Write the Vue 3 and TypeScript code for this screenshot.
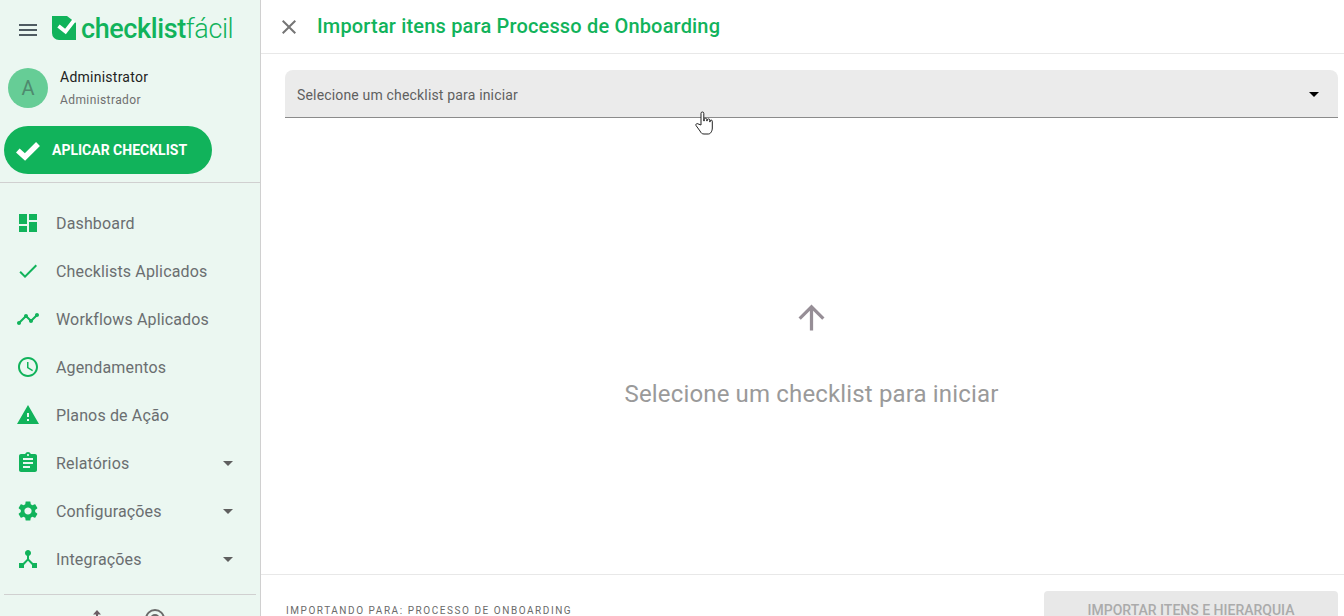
<script setup lang="ts">
interface MenuItem {
  label: string
  icon: string
  children?: boolean
}

const menu: MenuItem[] = [
  { label: 'Dashboard', icon: 'M3 13h8V3H3v10zm0 8h8v-6H3v6zm10 0h8V11h-8v10zm0-18v6h8V3h-8z' },
  { label: 'Checklists Aplicados', icon: 'M9 16.17 4.83 12l-1.42 1.41L9 19 21 7l-1.41-1.41z' },
  {
    label: 'Workflows Aplicados',
    icon: 'M23 8c0 1.1-.9 2-2 2-.18 0-.35-.02-.51-.07l-3.56 3.55c.05.16.07.34.07.52 0 1.1-.9 2-2 2s-2-.9-2-2c0-.18.02-.36.07-.52l-2.55-2.55c-.16.05-.34.07-.52.07s-.36-.02-.52-.07l-4.55 4.56c.05.16.07.33.07.51 0 1.1-.9 2-2 2s-2-.9-2-2 .9-2 2-2c.18 0 .35.02.51.07l4.56-4.55C8.02 9.36 8 9.18 8 9c0-1.1.9-2 2-2s2 .9 2 2c0 .18-.02.36-.07.52l2.55 2.55c.16-.05.34-.07.52-.07s.36.02.52.07l3.55-3.56C19.02 8.35 19 8.18 19 8c0-1.1.9-2 2-2s2 .9 2 2z'
  },
  {
    label: 'Agendamentos',
    icon: 'M11.99 2C6.47 2 2 6.48 2 12s4.47 10 9.99 10C17.52 22 22 17.52 22 12S17.52 2 11.99 2zM12 20c-4.42 0-8-3.58-8-8s3.58-8 8-8 8 3.58 8 8-3.58 8-8 8zm.5-13H11v6l5.25 3.15.75-1.23-4.5-2.67z'
  },
  { label: 'Planos de Ação', icon: 'M1 21h22L12 2 1 21zm12-3h-2v-2h2v2zm0-4h-2v-4h2v4z' },
  {
    label: 'Relatórios',
    icon: 'M19 3h-4.18C14.4 1.84 13.3 1 12 1c-1.3 0-2.4.84-2.82 2H5c-1.1 0-2 .9-2 2v14c0 1.1.9 2 2 2h14c1.1 0 2-.9 2-2V5c0-1.1-.9-2-2-2zm-7 0c.55 0 1 .45 1 1s-.45 1-1 1-1-.45-1-1 .45-1 1-1zm2 14H7v-2h7v2zm3-4H7v-2h10v2zm0-4H7V7h10v2z',
    children: true
  },
  {
    label: 'Configurações',
    icon: 'M19.14 12.94c.04-.3.06-.61.06-.94 0-.32-.02-.64-.07-.94l2.03-1.58c.18-.14.23-.41.12-.61l-1.92-3.32c-.12-.22-.37-.29-.59-.22l-2.39.96c-.5-.38-1.03-.7-1.62-.94l-.36-2.54c-.04-.24-.24-.41-.48-.41h-3.84c-.24 0-.43.17-.47.41l-.36 2.54c-.59.24-1.13.57-1.62.94l-2.39-.96c-.22-.08-.47 0-.59.22L2.74 8.87c-.12.21-.08.47.12.61l2.03 1.58c-.05.3-.09.63-.09.94s.02.64.07.94l-2.03 1.58c-.18.14-.23.41-.12.61l1.92 3.32c.12.22.37.29.59.22l2.39-.96c.5.38 1.03.7 1.62.94l.36 2.54c.05.24.24.41.48.41h3.84c.24 0 .44-.17.47-.41l.36-2.54c.59-.24 1.13-.56 1.62-.94l2.39.96c.22.08.47 0 .59-.22l1.92-3.32c.12-.22.07-.47-.12-.61l-2.01-1.58zM12 15.6c-1.98 0-3.6-1.62-3.6-3.6s1.62-3.6 3.6-3.6 3.6 1.62 3.6 3.6-1.62 3.6-3.6 3.6z',
    children: true
  },
  {
    label: 'Integrações',
    icon: 'M17 16l-4-4V8.82C14.16 8.4 15 7.3 15 6c0-1.66-1.34-3-3-3S9 4.34 9 6c0 1.3.84 2.4 2 2.82V12l-4 4H3v5h5v-3.05l4-4.2 4 4.2V21h5v-5h-4z',
    children: true
  }
]
</script>

<template>
  <div class="app">
    <aside class="sidebar">
      <div class="brand">
        <svg class="burger" viewBox="0 0 18 12" width="18" height="12">
          <path d="M0 0h18v2H0zM0 5h18v2H0zM0 10h18v2H0z" fill="#4f5b62" />
        </svg>
        <svg class="logo-mark" viewBox="0 0 24 24" width="24" height="24">
          <path d="M0 0h15l9 7v17H7a7 7 0 0 1-7-7z" fill="#11b35b" />
          <path d="M6.5 10l7 5.5L22 4.5" fill="none" stroke="#fff" stroke-width="3.8" />
        </svg>
        <span class="logo-text"><b>checklist</b>fácil</span>
      </div>

      <div class="user">
        <div class="avatar">A</div>
        <div class="user-info">
          <div class="user-name">Administrator</div>
          <div class="user-role">Administrador</div>
        </div>
      </div>

      <button class="apply">
        <svg viewBox="0 0 24 24" width="24" height="24">
          <path d="M1.8 12.5 9 19 22 6" fill="none" stroke="#fff" stroke-width="5.5" />
        </svg>
        APLICAR CHECKLIST
      </button>

      <nav class="menu">
        <a v-for="item in menu" :key="item.label" class="menu-item">
          <svg class="menu-icon" viewBox="0 0 24 24" width="24" height="24">
            <path :d="item.icon" fill="#11b35b" />
          </svg>
          <span class="menu-label">{{ item.label }}</span>
          <span v-if="item.children" class="caret"></span>
        </a>
      </nav>

      <div class="side-footer">
        <svg viewBox="0 0 24 24" width="24" height="24">
          <path d="M12 3l4 4.5h-3V21h-2V7.5H8z" fill="#6b5d64" />
        </svg>
        <svg viewBox="0 0 24 24" width="24" height="24">
          <circle cx="12" cy="12" r="9" fill="none" stroke="#6b6b6b" stroke-width="2" />
          <circle cx="12" cy="12" r="4" fill="none" stroke="#6b6b6b" stroke-width="2" />
        </svg>
      </div>
    </aside>

    <main class="main">
      <header class="header">
        <svg viewBox="0 0 24 24" width="24" height="24">
          <path d="M19 6.41 17.59 5 12 10.59 6.41 5 5 6.41 10.59 12 5 17.59 6.41 19 12 13.41 17.59 19 19 17.59 13.41 12z" fill="#757575" />
        </svg>
        <h1>Importar itens para Processo de Onboarding</h1>
      </header>

      <div class="content">
        <div class="select">
          <span>Selecione um checklist para iniciar</span>
          <span class="select-caret"></span>
        </div>

        <div class="empty">
          <svg viewBox="0 0 24 24" width="39" height="39">
            <path d="M4 12l1.41 1.41L11 7.83V20h2V7.83l5.58 5.59L20 12l-8-8-8 8z" fill="#968e96" />
          </svg>
          <p>Selecione um checklist para iniciar</p>
        </div>
      </div>

      <footer class="footer">
        <span class="target">IMPORTANDO PARA: PROCESSO DE ONBOARDING</span>
        <button class="import" disabled>IMPORTAR ITENS E HIERARQUIA</button>
      </footer>

      <svg class="cursor" viewBox="0 0 18 24" width="18" height="24">
        <path d="M6 14V2.4a1.4 1.4 0 0 1 2.8 0V10h.4V8.6a1.3 1.3 0 0 1 2.6 0V10h.4V9.2a1.3 1.3 0 0 1 2.6 0V11h.3v-.8a1.1 1.1 0 0 1 2.2 0V17c0 3-1.6 6-4 6H9c-2 0-3-1-4-3l-4-5.5c-.7-1.2 1-2.6 2-1.6z" fill="#fff" stroke="#222" stroke-width="1" stroke-linejoin="round" />
      </svg>
    </main>
  </div>
</template>

<style>
html,
body {
  margin: 0;
  height: 100%;
  overflow: hidden;
}
</style>

<style scoped>
.app {
  display: flex;
  position: relative;
  width: 1344px;
  height: 616px;
  overflow: hidden;
  font-family: Roboto, "Liberation Sans", sans-serif;
  background: #fff;
}

.sidebar {
  flex: 0 0 261px;
  height: 616px;
  box-sizing: border-box;
  background: #ebf7f1;
  border-right: 1px solid #d0d0d0;
  overflow: hidden;
}

.brand {
  display: flex;
  align-items: center;
  height: 60px;
  padding-left: 19px;
}

.logo-mark {
  margin-left: 15px;
  margin-top: -4px;
}

.logo-text {
  margin-left: 5px;
  margin-top: -2px;
  font-size: 27px;
  font-weight: 300;
  letter-spacing: -0.4px;
  color: #11b35b;
  white-space: nowrap;
}

.logo-text b {
  font-weight: 500;
}

.user {
  display: flex;
  align-items: center;
  height: 56px;
  padding-left: 8px;
}

.avatar {
  width: 40px;
  height: 40px;
  border-radius: 50%;
  background: #66cd96;
  color: #4e8a6e;
  font-size: 20px;
  display: flex;
  align-items: center;
  justify-content: center;
}

.user-info {
  margin-left: 12px;
  padding-top: 1px;
}

.user-name {
  font-size: 14px;
  line-height: 20px;
  letter-spacing: 0.25px;
  color: #222;
  margin-bottom: 3px;
}

.user-role {
  font-size: 12px;
  line-height: 20px;
  letter-spacing: 0.4px;
  color: #6f6f6f;
}

.apply {
  display: flex;
  align-items: center;
  width: 208px;
  height: 48px;
  margin: 10px 0 8px 4px;
  padding: 0 0 0 12px;
  border: none;
  border-radius: 24px;
  background: #11b35b;
  color: #fff;
  font-family: inherit;
  font-size: 14px;
  font-weight: 700;
  gap: 12px;
}

.menu {
  border-top: 1px solid #d0d0d0;
  padding-top: 16px;
}

.menu-item {
  display: flex;
  align-items: center;
  height: 48px;
  padding-left: 16px;
}

.menu-label {
  margin-left: 16px;
  font-size: 16px;
  letter-spacing: 0.15px;
  color: #6a6e70;
  flex: 1;
}

.caret {
  width: 0;
  height: 0;
  margin-right: 27px;
  border-left: 5px solid transparent;
  border-right: 5px solid transparent;
  border-top: 5px solid #5f5f5f;
}

.side-footer {
  margin: 11px 4px 0;
  border-top: 1px solid #d0d0d0;
  display: flex;
  justify-content: center;
  gap: 34px;
  padding: 12px 8px 0 0;
}

.main {
  flex: 1;
  height: 616px;
  min-width: 0;
}

.header {
  display: flex;
  align-items: center;
  height: 53px;
  padding-left: 16px;
  border-bottom: 1px solid #e8e8e8;
}

.header h1 {
  margin: 0 0 2px 16px;
  font-size: 20px;
  font-weight: 500;
  letter-spacing: 0.17px;
  color: #11b35b;
}

.content {
  box-sizing: border-box;
  height: 520px;
  padding: 16px 6px 0 24px;
}

.select {
  display: flex;
  align-items: center;
  justify-content: space-between;
  box-sizing: border-box;
  height: 48px;
  padding: 2px 19px 0 12px;
  background: #ebebeb;
  border-bottom: 1px solid #8b8b8b;
  border-radius: 8px 8px 0 0;
  font-size: 14px;
  letter-spacing: 0.17px;
  color: #5f5f5f;
}

.select-caret {
  width: 0;
  height: 0;
  border-left: 5px solid transparent;
  border-right: 5px solid transparent;
  border-top: 5px solid #000;
}

.empty {
  display: flex;
  flex-direction: column;
  align-items: center;
  padding-top: 180px;
}

.empty svg {
  display: block;
}

.empty p {
  margin: 41px 0 0;
  font-size: 24px;
  line-height: 32px;
  letter-spacing: 0.15px;
  color: #9a9a9a;
}

.footer {
  display: flex;
  align-items: flex-start;
  justify-content: space-between;
  border-top: 1px solid #e8e8e8;
  padding: 16px 6px 0 25px;
}

.target {
  margin-top: 14px;
  font-size: 10px;
  letter-spacing: 1.55px;
  color: #6a6a6a;
}

.import {
  width: 294px;
  height: 38px;
  padding: 0;
  border: none;
  border-radius: 4px;
  background: #e8e8e8;
  color: #ababab;
  font-family: inherit;
  font-size: 14px;
  font-weight: 500;
}

.cursor {
  position: absolute;
  left: 695px;
  top: 111px;
}
</style>
